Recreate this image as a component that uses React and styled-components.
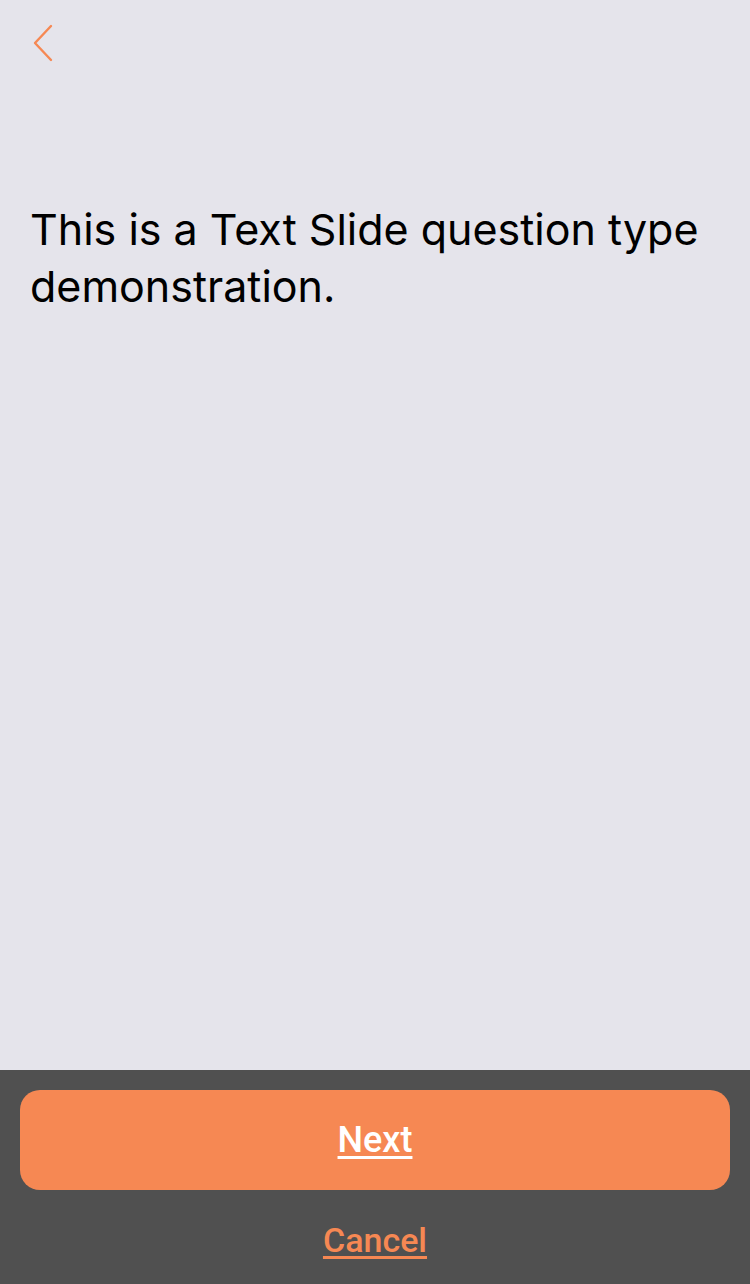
import React from "react";
import styled, { createGlobalStyle } from "styled-components";

const GlobalStyle = createGlobalStyle`
  html, body {
    margin: 0;
    padding: 0;
    background: #e5e4eb;
  }
  * {
    box-sizing: border-box;
  }
`;

const Screen = styled.div`
  display: flex;
  flex-direction: column;
  width: 750px;
  height: 1284px;
  background: #e5e4eb;
  font-family: Inter, "Noto Sans", sans-serif;
`;

const Header = styled.div`
  display: flex;
  align-items: center;
  height: 86px;
  padding-left: 28px;
`;

const BackButton = styled.button`
  display: flex;
  align-items: center;
  justify-content: center;
  width: 30px;
  height: 40px;
  padding: 0;
  border: none;
  background: none;
  cursor: pointer;
`;

const Body = styled.div`
  flex: 1;
  padding: 115px 30px 0;
`;

const SlideText = styled.p`
  margin: 0;
  font-size: 43px;
  line-height: 57px;
  letter-spacing: 0;
  color: #000;
  font-weight: 400;
`;

const Footer = styled.div`
  display: flex;
  flex-direction: column;
  align-items: center;
  height: 214px;
  padding: 20px 20px 0;
  background: #505050;
`;

const PrimaryButton = styled.button`
  width: 100%;
  height: 100px;
  border: none;
  border-radius: 20px;
  background: #f68853;
  color: #fff;
  font-family: Roboto, "Liberation Sans", sans-serif;
  font-size: 36px;
  font-weight: 500;
  text-decoration: underline;
  text-underline-offset: 4px;
  cursor: pointer;
`;

const LinkButton = styled.button`
  margin-top: 30px;
  padding: 0;
  border: none;
  background: none;
  color: #f68853;
  font-family: Roboto, "Liberation Sans", sans-serif;
  font-size: 34px;
  font-weight: 500;
  text-decoration: underline;
  text-underline-offset: 4px;
  cursor: pointer;
`;

const ChevronLeft = () => (
  <svg width="22" height="38" viewBox="0 0 22 38" fill="none">
    <path
      d="M19 2 L3 19 L19 36"
      stroke="#f68853"
      strokeWidth="2.4"
      strokeLinecap="round"
      strokeLinejoin="round"
    />
  </svg>
);

export default function App() {
  return (
    <>
      <GlobalStyle />
      <Screen>
        <Header>
          <BackButton aria-label="Back">
            <ChevronLeft />
          </BackButton>
        </Header>
        <Body>
          <SlideText>This is a Text Slide question type demonstration.</SlideText>
        </Body>
        <Footer>
          <PrimaryButton>Next</PrimaryButton>
          <LinkButton>Cancel</LinkButton>
        </Footer>
      </Screen>
    </>
  );
}
